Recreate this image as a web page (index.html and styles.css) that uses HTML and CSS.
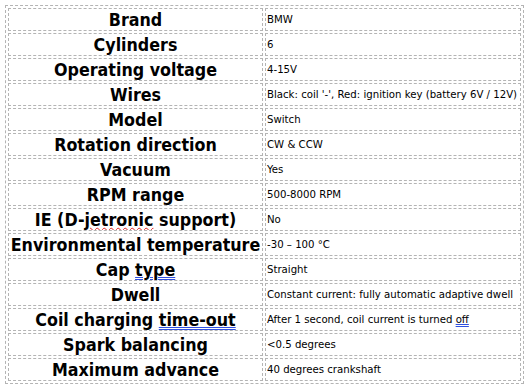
FILE: index.html
```html
<!DOCTYPE html>
<html>
<head>
<meta charset="utf-8">
<link rel="stylesheet" href="styles.css">
</head>
<body>
<table class="spec">
  <tr><td class="k">Brand</td><td class="v">BMW</td></tr>
  <tr><td class="k">Cylinders</td><td class="v">6</td></tr>
  <tr><td class="k">Operating voltage</td><td class="v">4-15V</td></tr>
  <tr><td class="k">Wires</td><td class="v">Black: coil '-', Red: ignition key (battery 6V / 12V)</td></tr>
  <tr><td class="k">Model</td><td class="v">Switch</td></tr>
  <tr><td class="k">Rotation direction</td><td class="v">CW &amp; CCW</td></tr>
  <tr><td class="k">Vacuum</td><td class="v">Yes</td></tr>
  <tr><td class="k">RPM range</td><td class="v">500-8000 RPM</td></tr>
  <tr><td class="k">IE (D-<span class="spell">jetronic</span> support)</td><td class="v">No</td></tr>
  <tr><td class="k">Environmental temperature</td><td class="v">-30 – 100 °C</td></tr>
  <tr><td class="k">Cap <span class="gram">type</span></td><td class="v">Straight</td></tr>
  <tr><td class="k">Dwell</td><td class="v">Constant current: fully automatic adaptive dwell</td></tr>
  <tr><td class="k">Coil charging <span class="gram">time-out</span></td><td class="v">After 1 second, coil current is turned <span class="gram">off</span></td></tr>
  <tr><td class="k">Spark balancing</td><td class="v">&lt;0.5 degrees</td></tr>
  <tr><td class="k">Maximum advance</td><td class="v">40 degrees crankshaft</td></tr>
</table>
</body>
</html>
```

FILE: styles.css
```css
html, body {
  background: #ffffff;
}
body {
  margin: 5px 0 0 5px;
}
.spec {
  border: 1px dashed #b4b4b4;
  border-collapse: separate;
  border-spacing: 2px;
  width: 519px;
  table-layout: fixed;
}
.spec td {
  border: 1px dashed #b4b4b4;
  height: 21px;
  padding: 0 1px;
  color: #000;
  white-space: nowrap;
  overflow: hidden;
}
.k {
  width: 251px;
  text-align: center;
  font-family: "DejaVu Sans Condensed", "DejaVu Sans", sans-serif;
  font-weight: bold;
  font-size: 17.7px;
}
.v {
  font-family: "DejaVu Sans Condensed", "DejaVu Sans", sans-serif;
  font-size: 11.3px;
}
.spell {
  text-decoration: underline wavy #e02020;
  text-decoration-thickness: 1px;
}
.gram {
  text-decoration: underline double #3050e0;
  text-decoration-thickness: 1px;
}
```
